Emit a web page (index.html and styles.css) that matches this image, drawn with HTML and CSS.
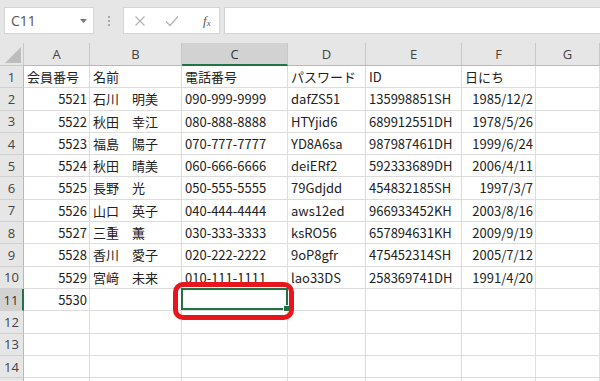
FILE: index.html
```html
<!DOCTYPE html>
<html lang="ja">
<head>
    <meta charset="UTF-8">
    <title>会員リスト</title>
    <link rel="stylesheet" href="styles.css">
</head>
<body>
    <!-- Name box + formula bar -->
    <div class="formula-bar">
        <div class="name-box">
            <span>C11</span>
            <svg width="7" height="4" viewBox="0 0 7 4"><path d="M0 0h7L3.5 4z" fill="#777"/></svg>
        </div>
        <div class="grip"><i></i><i></i><i></i></div>
        <div class="fx-buttons">
            <svg width="12" height="12" viewBox="0 0 12 12"><path d="M1.5 1.5l9 9M10.5 1.5l-9 9" stroke="#b4b4b4" stroke-width="1.3" fill="none"/></svg>
            <svg width="14" height="12" viewBox="0 0 14 12"><path d="M1 6.5l4 4L13 1.5" stroke="#b4b4b4" stroke-width="1.3" fill="none"/></svg>
            <span class="fx">f<sub>x</sub></span>
        </div>
        <div class="formula-input"></div>
    </div>

    <!-- Sheet grid -->
    <div class="sheet">
        <div class="corner"><svg width="16" height="16" viewBox="0 0 16 16"><path d="M16 0V16H0z" fill="#bdbdbd"/></svg></div>
        <div class="ch">A</div>
        <div class="ch">B</div>
        <div class="ch active">C</div>
        <div class="ch">D</div>
        <div class="ch">E</div>
        <div class="ch">F</div>
        <div class="ch">G</div>

        <div class="rh">1</div>
        <div class="c">会員番号</div><div class="c">名前</div><div class="c">電話番号</div><div class="c">パスワード</div><div class="c">ID</div><div class="c">日にち</div><div class="c"></div>

        <div class="rh">2</div>
        <div class="c n">5521</div><div class="c">石川　明美</div><div class="c">090-999-9999</div><div class="c">dafZS51</div><div class="c">135998851SH</div><div class="c n">1985/12/2</div><div class="c"></div>

        <div class="rh">3</div>
        <div class="c n">5522</div><div class="c">秋田　幸江</div><div class="c">080-888-8888</div><div class="c">HTYjid6</div><div class="c">689912551DH</div><div class="c n">1978/5/26</div><div class="c"></div>

        <div class="rh">4</div>
        <div class="c n">5523</div><div class="c">福島　陽子</div><div class="c">070-777-7777</div><div class="c">YD8A6sa</div><div class="c">987987461DH</div><div class="c n">1999/6/24</div><div class="c"></div>

        <div class="rh">5</div>
        <div class="c n">5524</div><div class="c">秋田　晴美</div><div class="c">060-666-6666</div><div class="c">deiERf2</div><div class="c">592333689DH</div><div class="c n">2006/4/11</div><div class="c"></div>

        <div class="rh">6</div>
        <div class="c n">5525</div><div class="c">長野　光</div><div class="c">050-555-5555</div><div class="c">79Gdjdd</div><div class="c">454832185SH</div><div class="c n">1997/3/7</div><div class="c"></div>

        <div class="rh">7</div>
        <div class="c n">5526</div><div class="c">山口　英子</div><div class="c">040-444-4444</div><div class="c">aws12ed</div><div class="c">966933452KH</div><div class="c n">2003/8/16</div><div class="c"></div>

        <div class="rh">8</div>
        <div class="c n">5527</div><div class="c">三重　薫</div><div class="c">030-333-3333</div><div class="c">ksRO56</div><div class="c">657894631KH</div><div class="c n">2009/9/19</div><div class="c"></div>

        <div class="rh">9</div>
        <div class="c n">5528</div><div class="c">香川　愛子</div><div class="c">020-222-2222</div><div class="c">9oP8gfr</div><div class="c">475452314SH</div><div class="c n">2005/7/12</div><div class="c"></div>

        <div class="rh">10</div>
        <div class="c n">5529</div><div class="c">宮﨑　未来</div><div class="c">010-111-1111</div><div class="c">lao33DS</div><div class="c">258369741DH</div><div class="c n">1991/4/20</div><div class="c"></div>

        <div class="rh active">11</div>
        <div class="c n">5530</div><div class="c"></div>
        <div class="c selected">
            <div class="sel-frame"><span class="fill-handle"></span></div>
            <div class="mark"></div>
        </div>
        <div class="c"></div><div class="c"></div><div class="c"></div><div class="c"></div>

        <div class="rh">12</div>
        <div class="c"></div><div class="c"></div><div class="c"></div><div class="c"></div><div class="c"></div><div class="c"></div><div class="c"></div>

        <div class="rh">13</div>
        <div class="c"></div><div class="c"></div><div class="c"></div><div class="c"></div><div class="c"></div><div class="c"></div><div class="c"></div>

        <div class="rh">14</div>
        <div class="c"></div><div class="c"></div><div class="c"></div><div class="c"></div><div class="c"></div><div class="c"></div><div class="c"></div>

        <!-- row 15 is cut off by the window edge -->
        <div class="rh"></div>
        <div class="c"></div><div class="c"></div><div class="c"></div><div class="c"></div><div class="c"></div><div class="c"></div><div class="c"></div>
    </div>
</body>
</html>
```

FILE: styles.css
```css
/* Page */
body {
    margin: 0;
    width: 600px;
    height: 381px;
    overflow: hidden;
    background-color: #fff;
    font-family: "Noto Sans CJK JP", sans-serif;
    color: #222;
}

/* Formula bar */
.formula-bar {
    height: 43px;
    box-sizing: border-box;
    padding: 7px 0 0 4px;
    background-color: #e6e6e6;
    display: flex;
    align-items: flex-start;
}

.name-box {
    width: 90px;
    height: 27px;
    box-sizing: border-box;
    padding: 0 6px 0 6px;
    background-color: #fff;
    border: 1px solid #d4d4d4;
    display: flex;
    align-items: center;
    justify-content: space-between;
    font-family: "Open Sans", sans-serif;
    font-size: 14px;
    color: #555;
}

.grip {
    width: 29px;
    height: 27px;
    display: flex;
    flex-direction: column;
    align-items: center;
    justify-content: center;
    gap: 2px;
}

.grip i {
    width: 2px;
    height: 2px;
    background-color: #a8a8a8;
}

.fx-buttons {
    width: 97px;
    height: 27px;
    box-sizing: border-box;
    background-color: #fff;
    border: 1px solid #d4d4d4;
    display: flex;
    align-items: center;
    padding: 0 0 0 10px;
    gap: 19px;
}

.fx {
    font-family: "Liberation Serif", serif;
    font-style: italic;
    font-size: 13px;
    color: #555;
    margin-left: 5px;
}

.fx sub {
    font-size: 9px;
    vertical-align: -1px;
}

.formula-input {
    flex: 1;
    height: 27px;
    margin-left: 4px;
    box-sizing: border-box;
    background-color: #fff;
    border: 1px solid #d4d4d4;
    border-right: none;
}

/* Sheet */
.sheet {
    display: grid;
    grid-template-columns: 24px 66px 92px 106px 78px 96px 74px 64px;
    grid-template-rows: 23px repeat(15, 22.3px);
}

.corner,
.ch,
.rh {
    background-color: #e6e6e6;
    box-sizing: border-box;
    font-family: "Open Sans", sans-serif;
    font-size: 13px;
    color: #444;
    display: flex;
    align-items: center;
    justify-content: center;
}

.corner {
    border-right: 1px solid #c8c8c8;
    border-bottom: 1px solid #c8c8c8;
    align-items: flex-end;
    justify-content: flex-end;
    padding: 0 2px 2px 0;
}

.ch {
    border-right: 1px solid #c8c8c8;
    border-bottom: 1px solid #b8b8b8;
}

.ch.active {
    background-color: #d2d2d2;
    border-bottom: 2px solid #217346;
    color: #333;
}

.rh {
    border-right: 1px solid #b8b8b8;
    border-bottom: 1px solid #d0d0d0;
}

.rh.active {
    background-color: #d2d2d2;
    border-right: 2px solid #217346;
    color: #333;
}

.c {
    box-sizing: border-box;
    border-right: 1px solid #dcdcdc;
    border-bottom: 1px solid #dcdcdc;
    padding: 0 3px;
    font-size: 13px;
    line-height: 21px;
    white-space: nowrap;
    overflow: visible;
}

.c.n {
    text-align: right;
    padding-right: 2px;
}

/* Active cell */
.selected {
    position: relative;
}

.sel-frame {
    position: absolute;
    top: -1px;
    left: -1px;
    right: -1px;
    bottom: 0;
    border: 2px solid #217346;
    z-index: 2;
}

.fill-handle {
    position: absolute;
    right: -4px;
    bottom: -4px;
    width: 5px;
    height: 5px;
    background-color: #217346;
    border: 1px solid #fff;
}

/* Red highlight around the active cell */
.mark {
    position: absolute;
    top: -7px;
    left: -9px;
    right: -7px;
    bottom: -10px;
    border: 5px solid #e8161c;
    border-radius: 10px;
    z-index: 3;
}
```
